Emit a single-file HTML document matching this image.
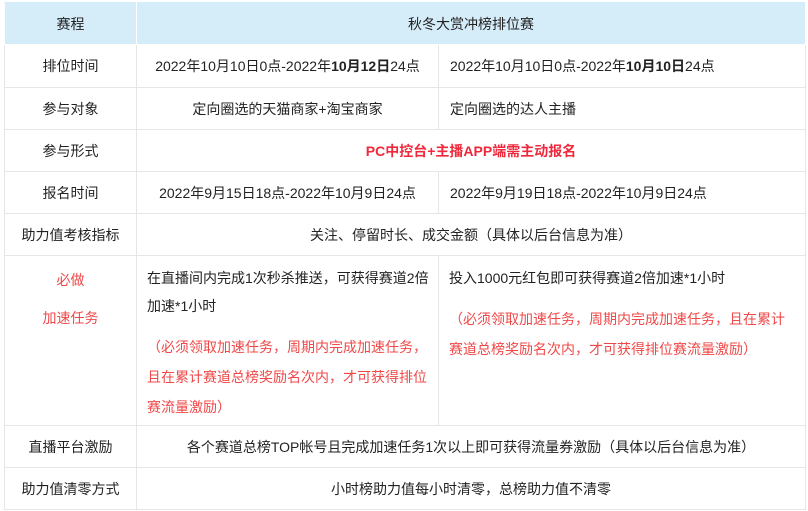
<!DOCTYPE html><html><head><meta charset="utf-8"><style>
body{margin:0;background:#fff;font-family:"Liberation Sans","Noto Sans CJK SC",sans-serif;font-size:14px;color:#222}
table{position:absolute;left:4px;top:2px;border-collapse:collapse;table-layout:fixed;width:801px}
td{border:1px solid #e6e6e6;text-align:center;padding:0;line-height:20px}
tr.h td{background:#d5ecf9;border-color:#d5ecf9 #fff #fff #fff;height:41px}
td.c3{text-align:left;padding-left:11px}
.r{color:#f0283c;font-weight:bold}
.lr{color:#f04848}
.l{text-align:left;vertical-align:top;padding:8px 4px 0 10px;line-height:28px}
</style></head><body>
<table>
<col style="width:132px"><col style="width:302px"><col style="width:367px">
<tr class="h"><td>赛程</td><td colspan="2">秋冬大赏冲榜排位赛</td></tr>
<tr style="height:43px"><td>排位时间</td><td>2022年10月10日0点-2022年<b>10月12日</b>24点</td><td class="c3">2022年10月10日0点-2022年<b>10月10日</b>24点</td></tr>
<tr style="height:42px"><td>参与对象</td><td>定向圈选的天猫商家+淘宝商家</td><td class="c3">定向圈选的达人主播</td></tr>
<tr style="height:42px"><td>参与形式</td><td colspan="2" class="r">PC中控台+主播APP端需主动报名</td></tr>
<tr style="height:42px"><td>报名时间</td><td>2022年9月15日18点-2022年10月9日24点</td><td class="c3">2022年9月19日18点-2022年10月9日24点</td></tr>
<tr style="height:42px"><td>助力值考核指标</td><td colspan="2">关注、停留时长、成交金额（具体以后台信息为准）</td></tr>
<tr style="height:170px"><td class="lr" style="vertical-align:top;padding-top:10px;line-height:20px"><div style="height:38px;line-height:28px">必做</div><div style="line-height:28px">加速任务</div></td>
<td class="l">在直播间内完成1次秒杀推送，可获得赛道2倍加速*1小时<div class="lr" style="margin-top:12px;line-height:30px;padding-right:6px">（必须领取加速任务，周期内完成加速任务，且在累计赛道总榜奖励名次内，才可获得排位赛流量激励）</div></td>
<td class="l">投入1000元红包即可获得赛道2倍加速*1小时<div class="lr" style="margin-top:12px;line-height:30px">（必须领取加速任务，周期内完成加速任务，且在累计<br>赛道总榜奖励名次内，才可获得排位赛流量激励）</div></td></tr>
<tr style="height:42px"><td>直播平台激励</td><td colspan="2">各个赛道总榜TOP帐号且完成加速任务1次以上即可获得流量券激励（具体以后台信息为准）</td></tr>
<tr style="height:42px"><td>助力值清零方式</td><td colspan="2">小时榜助力值每小时清零，总榜助力值不清零</td></tr>
</table></body></html>
